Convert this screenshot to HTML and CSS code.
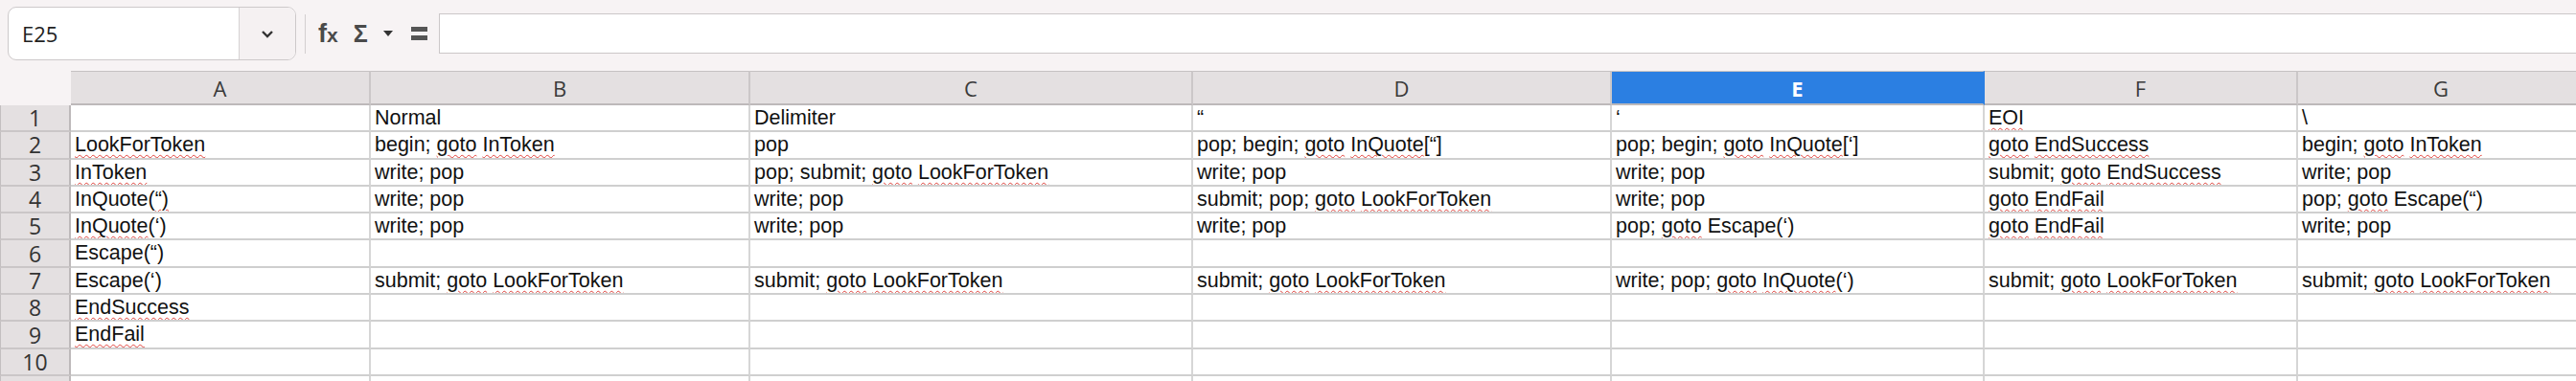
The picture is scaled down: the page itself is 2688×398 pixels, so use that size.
FILE: index.html
```html
<!DOCTYPE html>
<html>
<head>
    <title>Sheet</title>
    <link rel="stylesheet" href="styles.css">
</head>
<body>
    <div class="toolbar">
        <div class="name-box">
            <div class="ref">E25</div>
            <div class="drop">
                <svg width="14" height="9" viewBox="0 0 14 9"><polyline points="2,2 7,7 12,2" fill="none" stroke="#333" stroke-width="2.4"/></svg>
            </div>
        </div>
        <div class="sep"></div>
        <div class="fx"><span class="f">f</span><span class="x">x</span></div>
        <div class="sigma">&Sigma;</div>
        <div class="caret">
            <svg width="10" height="6" viewBox="0 0 10 6"><polygon points="0,0 10,0 5,6" fill="#333"/></svg>
        </div>
        <div class="eq"></div>
        <div class="formula"></div>
    </div>

    <div class="sheet">
        <div class="corner"></div>
        <div class="col">A</div>
        <div class="col">B</div>
        <div class="col">C</div>
        <div class="col">D</div>
        <div class="col active">E</div>
        <div class="col">F</div>
        <div class="col">G</div>

        <div class="rh">1</div>
        <div class="c"></div>
        <div class="c">Normal</div>
        <div class="c">Delimiter</div>
        <div class="c">&ldquo;</div>
        <div class="c">&lsquo;</div>
        <div class="c"><span class="sp">EOI</span></div>
        <div class="c">\</div>

        <div class="rh">2</div>
        <div class="c"><span class="sp">LookForToken</span></div>
        <div class="c">begin; <span class="sp">goto</span> <span class="sp">InToken</span></div>
        <div class="c">pop</div>
        <div class="c">pop; begin; <span class="sp">goto</span> <span class="sp">InQuote</span>[&ldquo;]</div>
        <div class="c">pop; begin; <span class="sp">goto</span> <span class="sp">InQuote</span>[&lsquo;]</div>
        <div class="c"><span class="sp">goto</span> <span class="sp">EndSuccess</span></div>
        <div class="c">begin; <span class="sp">goto</span> <span class="sp">InToken</span></div>

        <div class="rh">3</div>
        <div class="c"><span class="sp">InToken</span></div>
        <div class="c">write; pop</div>
        <div class="c">pop; submit; <span class="sp">goto</span> <span class="sp">LookForToken</span></div>
        <div class="c">write; pop</div>
        <div class="c">write; pop</div>
        <div class="c">submit; <span class="sp">goto</span> <span class="sp">EndSuccess</span></div>
        <div class="c">write; pop</div>

        <div class="rh">4</div>
        <div class="c">InQuote(<span class="sp">&ldquo;)</span></div>
        <div class="c">write; pop</div>
        <div class="c">write; pop</div>
        <div class="c">submit; pop; <span class="sp">goto</span> <span class="sp">LookForToken</span></div>
        <div class="c">write; pop</div>
        <div class="c"><span class="sp">goto</span> <span class="sp">EndFail</span></div>
        <div class="c">pop; <span class="sp">goto</span> Escape(&ldquo;)</div>

        <div class="rh">5</div>
        <div class="c"><span class="sp">InQuote</span>(&lsquo;)</div>
        <div class="c">write; pop</div>
        <div class="c">write; pop</div>
        <div class="c">write; pop</div>
        <div class="c">pop; <span class="sp">goto</span> Escape(&lsquo;)</div>
        <div class="c"><span class="sp">goto</span> <span class="sp">EndFail</span></div>
        <div class="c">write; pop</div>

        <div class="rh">6</div>
        <div class="c">Escape(&ldquo;)</div>
        <div class="c"></div>
        <div class="c"></div>
        <div class="c"></div>
        <div class="c"></div>
        <div class="c"></div>
        <div class="c"></div>

        <div class="rh">7</div>
        <div class="c">Escape(&lsquo;)</div>
        <div class="c">submit; <span class="sp">goto</span> <span class="sp">LookForToken</span></div>
        <div class="c">submit; <span class="sp">goto</span> <span class="sp">LookForToken</span></div>
        <div class="c">submit; <span class="sp">goto</span> <span class="sp">LookForToken</span></div>
        <div class="c">write; pop; <span class="sp">goto</span> <span class="sp">InQuote</span>(&lsquo;)</div>
        <div class="c">submit; <span class="sp">goto</span> <span class="sp">LookForToken</span></div>
        <div class="c">submit; <span class="sp">goto</span> <span class="sp">LookForToken</span></div>

        <div class="rh">8</div>
        <div class="c"><span class="sp">EndSuccess</span></div>
        <div class="c"></div>
        <div class="c"></div>
        <div class="c"></div>
        <div class="c"></div>
        <div class="c"></div>
        <div class="c"></div>

        <div class="rh">9</div>
        <div class="c"><span class="sp">EndFail</span></div>
        <div class="c"></div>
        <div class="c"></div>
        <div class="c"></div>
        <div class="c"></div>
        <div class="c"></div>
        <div class="c"></div>

        <div class="rh">10</div>
        <div class="c"></div>
        <div class="c"></div>
        <div class="c"></div>
        <div class="c"></div>
        <div class="c"></div>
        <div class="c"></div>
        <div class="c"></div>

        <div class="rh"></div>
        <div class="c"></div>
        <div class="c"></div>
        <div class="c"></div>
        <div class="c"></div>
        <div class="c"></div>
        <div class="c"></div>
        <div class="c"></div>
    </div>
</body>
</html>
```

FILE: styles.css
```css
body {
    margin: 0;
    padding: 0;
    width: 2688px;
    height: 398px;
    overflow: hidden;
    background-color: #f7f3f4;
    font-family: "Liberation Sans", Arial, sans-serif;
}

.toolbar {
    display: flex;
    align-items: center;
    height: 70px;
    padding-left: 8px;
    margin-bottom: 4px;
}

.name-box {
    display: flex;
    width: 301px;
    height: 56px;
    box-sizing: border-box;
    border: 1px solid #cdc9ca;
    border-radius: 9px;
    background-color: #ffffff;
    overflow: hidden;
}

.ref {
    flex: 1;
    display: flex;
    align-items: center;
    padding-left: 14px;
    font-family: "Open Sans", sans-serif;
    font-size: 22px;
    color: #222;
}

.drop {
    width: 58px;
    display: flex;
    align-items: center;
    justify-content: center;
    border-left: 1px solid #d6d2d3;
    background-color: #f5f1f2;
}

.sep {
    width: 1px;
    height: 41px;
    margin-left: 9px;
    background-color: #d3cfd0;
}

.fx {
    margin-left: 13px;
    color: #4a4a4a;
    font-weight: bold;
    line-height: 1;
}

.fx .f {
    font-size: 27px;
}

.fx .x {
    font-size: 21px;
}

.sigma {
    margin-left: 16px;
    font-size: 25px;
    font-weight: bold;
    color: #4a4a4a;
    line-height: 1;
}

.caret {
    display: flex;
    margin-left: 16px;
}

.eq {
    width: 17px;
    height: 14px;
    margin-left: 19px;
    box-sizing: border-box;
    border-top: 5px solid #555;
    border-bottom: 5px solid #555;
}

.formula {
    flex: 1;
    height: 42px;
    margin-left: 12px;
    margin-right: -10px;
    box-sizing: border-box;
    border: 1px solid #cbc7c8;
    background-color: #ffffff;
}

.sheet {
    display: grid;
    grid-template-columns: 74px 313px 396px 462px 437px 389px 327px 300px;
    grid-template-rows: 36px;
    grid-auto-rows: 28.3px;
}

.sheet > div {
    box-sizing: border-box;
}

.col {
    display: flex;
    align-items: center;
    justify-content: center;
    background-color: #e4e0e1;
    border-top: 1px solid #c6c2c3;
    border-right: 2px solid #cbc7c8;
    border-bottom: 2px solid #bdb9ba;
    font-family: "Open Sans", sans-serif;
    font-size: 22px;
    color: #3a3a3a;
}

.col.active {
    background-color: #2b7fe2;
    border-right-color: #2b7fe2;
    color: #ffffff;
    font-weight: bold;
}

.rh {
    display: flex;
    align-items: center;
    justify-content: center;
    background-color: #e4e0e1;
    border-left: 1px solid #c3bfc0;
    border-right: 2px solid #bdb9ba;
    border-bottom: 2px solid #cac6c7;
    font-family: "Open Sans", sans-serif;
    font-size: 23px;
    color: #333;
}

.c {
    padding: 1px 4px 0 4px;
    background-color: #ffffff;
    border-right: 2px solid #d6d6d6;
    border-bottom: 2px solid #cfcfcf;
    font-size: 21.5px;
    line-height: 25px;
    color: #111;
    white-space: nowrap;
    overflow: hidden;
}

.sp {
    text-decoration: underline wavy #e0413b;
    text-decoration-thickness: 1px;
    text-underline-offset: 3px;
}
```
